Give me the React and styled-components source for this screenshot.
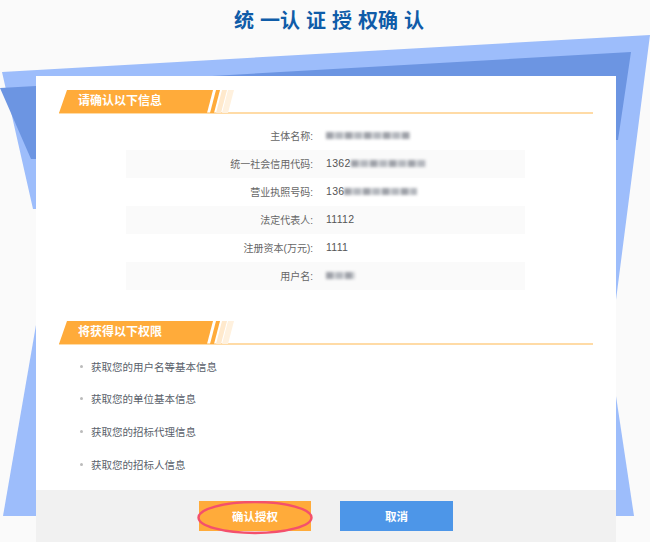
import styled, { createGlobalStyle } from "styled-components";

const Global = createGlobalStyle`
  html, body {
    margin: 0;
    padding: 0;
    background: #fafafa;
  }
  body {
    font-family: "Liberation Sans", "Noto Sans CJK SC", sans-serif;
  }
`;

const Page = styled.div`
  position: relative;
  width: 650px;
  height: 542px;
  overflow: hidden;
`;

const Backdrop = styled.svg`
  position: absolute;
  left: 0;
  top: 0;
`;

const Title = styled.h1`
  position: relative;
  margin: 0;
  height: 76px;
  box-sizing: border-box;
  padding: 6px 0 0 234px;
  font-family: "Noto Sans CJK SC", sans-serif;
  font-size: 20px;
  line-height: 28px;
  font-weight: 700;
  color: #0f5ca8;
`;

const TitlePart = styled.span`
  margin-right: 6px;
`;

const Card = styled.main`
  position: relative;
  width: 580px;
  height: 466px;
  margin-left: 36px;
  background: #fff;
  display: flex;
  flex-direction: column;
`;

const Body = styled.div`
  flex: 1;
  padding: 14px 23px 0;
`;

const Heading = styled.div`
  position: relative;
  height: 24px;
  box-sizing: border-box;
  border-bottom: 2px solid #ffdba6;
`;

const HeadingLabel = styled.div`
  width: 154px;
  height: 23px;
  box-sizing: border-box;
  padding-left: 19px;
  background: #ffab3a;
  clip-path: polygon(8px 0, 100% 0, 148px 100%, 0 100%);
  color: #fff;
  font-size: 12px;
  font-weight: 700;
  line-height: 22px;
`;

const Stripe = styled.span`
  position: absolute;
  top: 0;
  left: ${(p) => p.$left}px;
  width: ${(p) => p.$width + 6}px;
  height: 23px;
  background: ${(p) => p.$color};
  clip-path: polygon(6px 0, 100% 0, ${(p) => p.$width}px 100%, 0 100%);
`;

const Rows = styled.div`
  width: 399px;
  margin: 8px 0 31px 67px;
`;

const Row = styled.div`
  display: flex;
  align-items: center;
  height: 28px;
  padding-bottom: 2px;
  box-sizing: border-box;
  background: ${(p) => (p.$shaded ? "#fafafa" : "#fff")};
`;

const Label = styled.div`
  width: 187px;
  text-align: right;
  font-size: 10px;
  color: #666;
`;

const Value = styled.div`
  display: flex;
  align-items: center;
  margin-left: 13px;
  font-size: 10.5px;
  color: #555;
  letter-spacing: 0.3px;
`;

const Smudge = styled.span`
  display: block;
  width: ${(p) => p.$width}px;
  height: 7px;
  background: repeating-linear-gradient(
    90deg,
    #9ea1a8 0 7px,
    #cfd1d5 7px 10px,
    #b4b7bd 10px 17px,
    #e4e5e8 17px 19px
  );
  filter: blur(1.6px);
`;

const Perms = styled.ul`
  list-style: none;
  margin: 5px 0 0;
  padding: 0 0 0 21px;
`;

const Perm = styled.li`
  display: flex;
  align-items: center;
  height: 32.6px;
  font-size: 10.5px;
  color: #5a5f6b;

  &::before {
    content: "";
    width: 3px;
    height: 3px;
    border-radius: 50%;
    background: #bbb;
    margin-right: 8px;
  }
`;

const Footer = styled.footer`
  height: 52px;
  background: #f1f1f1;
  display: flex;
  gap: 29px;
  padding: 11px 0 0 163px;
  box-sizing: border-box;
`;

const Button = styled.button`
  position: relative;
  width: ${(p) => p.$width}px;
  height: 30px;
  border: 0;
  padding: 0;
  background: ${(p) => p.$color};
  color: #fff;
  font-family: inherit;
  font-size: 11.5px;
  font-weight: 700;
`;

const Ring = styled.svg`
  position: absolute;
  left: -2px;
  top: 0;
`;

const info = [
  { label: "主体名称:", smudge: 84, lead: "" },
  { label: "统一社会信用代码:", smudge: 75, lead: "1362" },
  { label: "营业执照号码:", smudge: 73, lead: "136" },
  { label: "法定代表人:", value: "11112" },
  { label: "注册资本(万元):", value: "1111" },
  { label: "用户名:", smudge: 29, lead: "" },
];

const perms = [
  "获取您的用户名等基本信息",
  "获取您的单位基本信息",
  "获取您的招标代理信息",
  "获取您的招标人信息",
];

const SectionHeading = ({ children }) => (
  <Heading>
    <HeadingLabel>{children}</HeadingLabel>
    <Stripe $left={151} $width={4} $color="#ffab3a" />
    <Stripe $left={157} $width={5} $color="#ffe9cc" />
    <Stripe $left={163} $width={6} $color="#fff1de" />
  </Heading>
);

export default function App() {
  return (
    <Page>
      <Global />
      <Backdrop width="650" height="542" aria-hidden="true">
        <polygon points="2,72 650,35 616,300 616,76 36,76 36,209 33,209" fill="#9dbdfb" />
        <polygon points="0,88 36,86 36,159 31,159" fill="#6c95e2" />
        <polygon points="36,86 631,52 618,140 616,140 616,76 36,76" fill="#6c95e2" />
        <polygon points="616,396 634,516 616,516" fill="#9dbdfb" />
        <polygon points="36,325 36,516 3,516" fill="#9dbdfb" />
      </Backdrop>
      <Title>
        <TitlePart>统</TitlePart>
        <TitlePart>一认</TitlePart>
        <TitlePart>证</TitlePart>
        <TitlePart>授</TitlePart>
        <TitlePart>权确</TitlePart>
        <TitlePart>认</TitlePart>
      </Title>
      <Card>
        <Body>
          <SectionHeading>请确认以下信息</SectionHeading>
          <Rows>
            {info.map((row, i) => (
              <Row key={row.label} $shaded={i % 2 === 1}>
                <Label>{row.label}</Label>
                <Value>
                  {row.value || row.lead}
                  {row.smudge && <Smudge $width={row.smudge} />}
                </Value>
              </Row>
            ))}
          </Rows>
          <SectionHeading>将获得以下权限</SectionHeading>
          <Perms>
            {perms.map((p) => (
              <Perm key={p}>{p}</Perm>
            ))}
          </Perms>
        </Body>
        <Footer>
          <Button $width={112} $color="#ffab3a">
            确认授权
            <Ring width="117" height="34" viewBox="0 0 117 34" fill="none" aria-hidden="true">
              <ellipse cx="58" cy="16.5" rx="56.5" ry="15.5" stroke="#f4506c" strokeWidth="2.4" />
            </Ring>
          </Button>
          <Button $width={113} $color="#4d96e8">取消</Button>
        </Footer>
      </Card>
    </Page>
  );
}
